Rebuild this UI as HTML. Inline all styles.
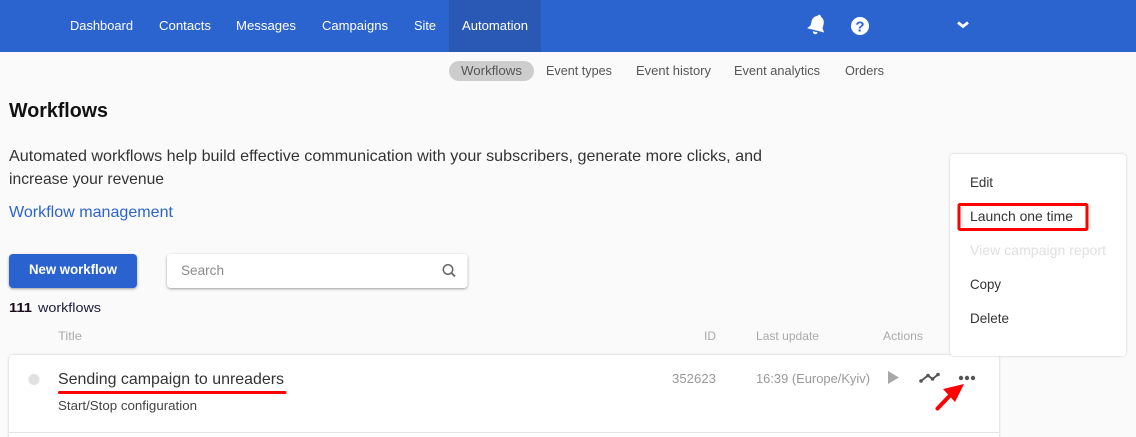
<!DOCTYPE html>
<html><head><meta charset="utf-8"><style>
html,body{margin:0;padding:0;background:#fafafa;width:1136px;height:437px;overflow:hidden}
svg{display:block}
text{font-family:"Liberation Sans",sans-serif}
</style></head><body>
<svg width="1136" height="437" viewBox="0 0 1136 437" xmlns="http://www.w3.org/2000/svg">
<defs>
<filter id="s" x="-10%" y="-20%" width="120%" height="150%"><feDropShadow dx="0" dy="1" stdDeviation="1.2" flood-color="#000" flood-opacity=".38"/></filter>
<filter id="c" x="-2%" y="-10%" width="104%" height="120%"><feDropShadow dx="0" dy="0" stdDeviation="1.2" flood-color="#000" flood-opacity=".2"/></filter>
</defs>
<rect width="1136" height="437" fill="#fafafa"/>
<rect width="1136" height="52" fill="#2b64cf"/>
<rect x="449" width="92" height="52" fill="#2a59b5"/>
<g fill="#fff" font-size="13">
<text x="70" y="30" textLength="63" lengthAdjust="spacingAndGlyphs">Dashboard</text>
<text x="159" y="30" textLength="52" lengthAdjust="spacingAndGlyphs">Contacts</text>
<text x="236" y="30" textLength="60" lengthAdjust="spacingAndGlyphs">Messages</text>
<text x="322" y="30" textLength="66" lengthAdjust="spacingAndGlyphs">Campaigns</text>
<text x="414" y="30" textLength="22" lengthAdjust="spacingAndGlyphs">Site</text>
<text x="462" y="30" textLength="66" lengthAdjust="spacingAndGlyphs">Automation</text>
</g>
<g transform="rotate(14 817 25)" fill="#fff"><path d="M817 14.500c1 0 1.800.8 1.800 1.700 3 .9 4.400 3.500 4.400 6.500v4.300l2.600 3.500H808.200l2.600-3.500v-4.300c0-3 1.400-5.600 4.400-6.500 0-.9.800-1.700 1.800-1.700z"/><path d="M814.600 32h4.800a2.400 2.400 0 0 1-4.800 0z"/></g>
<circle cx="860" cy="26" r="9" fill="#fff"/>
<text x="860" y="31.500" fill="#2b64cf" font-size="15" font-weight="bold" text-anchor="middle">?</text>
<path d="M958 22.500l5 4 5-4" fill="none" stroke="#fff" stroke-width="2.800"/>

<rect x="449" y="61" width="85" height="20" rx="10" fill="#cdcdcd"/>
<g fill="#555" font-size="13">
<text x="461" y="75" textLength="61" lengthAdjust="spacingAndGlyphs">Workflows</text>
<text x="546" y="75" textLength="66" lengthAdjust="spacingAndGlyphs">Event types</text>
<text x="636" y="75" textLength="75" lengthAdjust="spacingAndGlyphs">Event history</text>
<text x="734" y="75" textLength="86" lengthAdjust="spacingAndGlyphs">Event analytics</text>
<text x="845" y="75" textLength="39" lengthAdjust="spacingAndGlyphs">Orders</text>
</g>

<text x="9" y="117" fill="#111" font-size="20" font-weight="bold" textLength="99" lengthAdjust="spacingAndGlyphs">Workflows</text>
<text x="9" y="161" fill="#333" font-size="16" textLength="753" lengthAdjust="spacingAndGlyphs">Automated workflows help build effective communication with your subscribers, generate more clicks, and</text>
<text x="9" y="184" fill="#333" font-size="16" textLength="155" lengthAdjust="spacingAndGlyphs">increase your revenue</text>
<text x="9" y="217" fill="#2b64cf" font-size="16" textLength="164" lengthAdjust="spacingAndGlyphs">Workflow management</text>

<rect x="9" y="254" width="128" height="34" rx="4" fill="#2b64cf" filter="url(#s)"/>
<text x="29" y="274" fill="#fff" font-size="14" font-weight="bold" textLength="88" lengthAdjust="spacingAndGlyphs">New workflow</text>
<rect x="167" y="254" width="300.500" height="34" rx="4" fill="#fff" filter="url(#s)"/>
<text x="181" y="275" fill="#8a8a8a" font-size="14" textLength="43" lengthAdjust="spacingAndGlyphs">Search</text>
<circle cx="448" cy="269.500" r="4.700" fill="none" stroke="#666" stroke-width="1.500"/>
<path d="M451.500 273l3.500 3.500" stroke="#666" stroke-width="1.800" fill="none"/>

<text x="9" y="312" fill="#1a0a1a" font-size="13" font-weight="bold" textLength="23" lengthAdjust="spacingAndGlyphs">111</text>
<text x="38" y="312" fill="#1a1a3a" font-size="13" textLength="63" lengthAdjust="spacingAndGlyphs">workflows</text>

<g fill="#aaa" font-size="12">
<text x="58" y="340" textLength="24" lengthAdjust="spacingAndGlyphs">Title</text>
<text x="704" y="340" textLength="12" lengthAdjust="spacingAndGlyphs">ID</text>
<text x="756" y="340" textLength="63" lengthAdjust="spacingAndGlyphs">Last update</text>
<text x="883" y="340" textLength="40" lengthAdjust="spacingAndGlyphs">Actions</text>
</g>

<rect x="9" y="355" width="990" height="90" rx="4" fill="#fff" filter="url(#c)"/>
<rect x="9" y="432" width="990" height="1" fill="#e6e6e6"/>
<circle cx="34" cy="379.500" r="5.500" fill="#e0e0e0"/>
<text x="58" y="384" fill="#333" font-size="16" textLength="226" lengthAdjust="spacingAndGlyphs">Sending campaign to unreaders</text>
<rect x="58" y="391" width="228.500" height="3" rx="1.500" fill="#f00"/>
<text x="58" y="410" fill="#444" font-size="12.500" textLength="139" lengthAdjust="spacingAndGlyphs">Start/Stop configuration</text>
<text x="672" y="383" fill="#999" font-size="13" textLength="44" lengthAdjust="spacingAndGlyphs">352623</text>
<text x="756" y="383" fill="#999" font-size="13" textLength="114" lengthAdjust="spacingAndGlyphs">16:39 (Europe/Kyiv)</text>
<path d="M888 371l11 6.500-11 6.500z" fill="#a8a8a8"/>
<path d="M921 381l7-5.500 4.500 3.500 5.500-4.500" fill="none" stroke="#555" stroke-width="1.900"/>
<circle cx="921" cy="381" r="1.800" fill="#555"/><circle cx="928" cy="375.500" r="1.800" fill="#555"/><circle cx="932.500" cy="379" r="1.800" fill="#555"/><circle cx="938" cy="374.500" r="1.800" fill="#555"/>
<circle cx="961" cy="378" r="2.200" fill="#555"/><circle cx="967" cy="378" r="2.200" fill="#555"/><circle cx="973" cy="378" r="2.200" fill="#555"/>
<path d="M937.500 408.500l11.500-12" stroke="#f00" stroke-width="4" stroke-linecap="round" fill="none"/>
<path d="M964 384l-21 5 12 13z" fill="#f00"/>

<rect x="950" y="154" width="176" height="202" rx="4" fill="#fff" filter="url(#c)"/>
<g font-size="14" fill="#333">
<text x="970" y="187" textLength="23" lengthAdjust="spacingAndGlyphs">Edit</text>
<text x="970" y="221" textLength="103" lengthAdjust="spacingAndGlyphs">Launch one time</text>
<text x="970" y="255" fill="#e0e0e0" textLength="136" lengthAdjust="spacingAndGlyphs">View campaign report</text>
<text x="970" y="289" textLength="31" lengthAdjust="spacingAndGlyphs">Copy</text>
<text x="970" y="323" textLength="39" lengthAdjust="spacingAndGlyphs">Delete</text>
</g>
<rect x="959" y="204.500" width="128" height="25" rx="1" fill="none" stroke="#f00" stroke-width="3"/>
</svg>
</body></html>
